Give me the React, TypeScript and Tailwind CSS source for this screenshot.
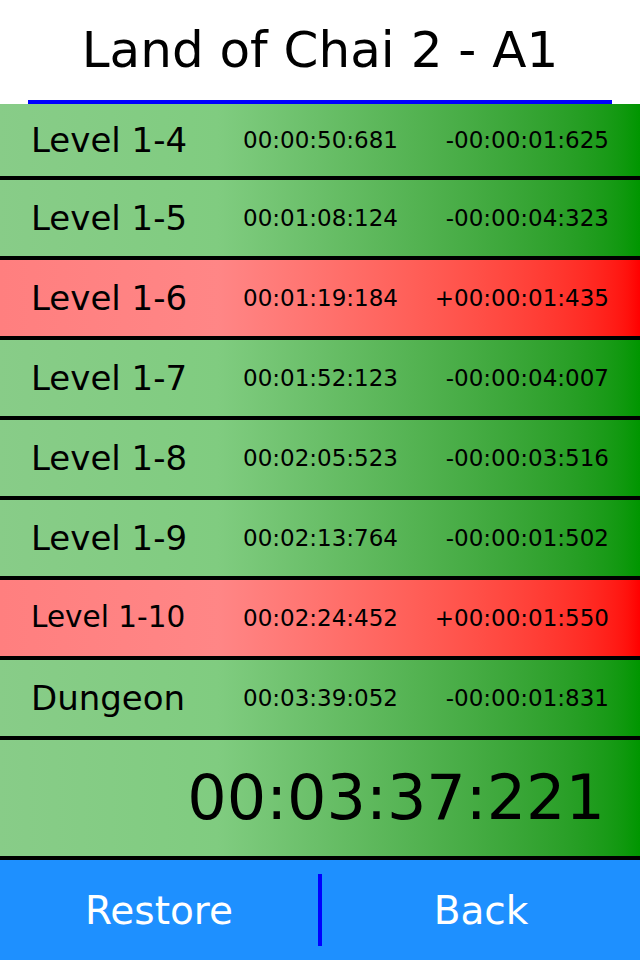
import React from "react";

type Row = { name: string; time: string; delta: string; bad: boolean; small?: boolean };

const rows: Row[] = [
  { name: "Level 1-4", time: "00:00:50:681", delta: "-00:00:01:625", bad: false },
  { name: "Level 1-5", time: "00:01:08:124", delta: "-00:00:04:323", bad: false },
  { name: "Level 1-6", time: "00:01:19:184", delta: "+00:00:01:435", bad: true },
  { name: "Level 1-7", time: "00:01:52:123", delta: "-00:00:04:007", bad: false },
  { name: "Level 1-8", time: "00:02:05:523", delta: "-00:00:03:516", bad: false },
  { name: "Level 1-9", time: "00:02:13:764", delta: "-00:00:01:502", bad: false },
  { name: "Level 1-10", time: "00:02:24:452", delta: "+00:00:01:550", bad: true, small: true },
  { name: "Dungeon", time: "00:03:39:052", delta: "-00:00:01:831", bad: false },
];

const green =
  "bg-gradient-to-r from-[#88cc88] via-[#80cc80] via-34% to-[#009600]";
const red =
  "bg-gradient-to-r from-[#ff7f7f] via-[#ff8686] via-34% to-[#ff0000]";

export default function App() {
  return (
    <div
      className="w-[640px] h-[960px] flex flex-col bg-white text-black overflow-hidden"
      style={{ fontFamily: '"DejaVu Sans", Verdana, sans-serif' }}
    >
      <div className="h-[100px] flex items-center justify-center text-[50px] leading-none">
        Land of Chai 2 - A1
      </div>
      <div className="h-[4px] mx-[28px] bg-[#0000ff]" />
      {rows.map((r, i) => (
        <div
          key={r.name}
          className={`flex items-center border-b-[4px] border-black ${
            i === 0 ? "h-[76px]" : "h-[80px]"
          } ${r.bad ? red : green}`}
        >
          <div
            className={`w-[243px] pl-[31px] leading-none ${
              r.small ? "text-[29.5px]" : "text-[34px]"
            }`}
          >
            {r.name}
          </div>
          <div className="text-[23px] leading-none">{r.time}</div>
          <div className="flex-1 text-right pr-[31px] text-[23px] leading-none">
            {r.delta}
          </div>
        </div>
      ))}
      <div
        className={`h-[120px] flex items-center justify-end pr-[35px] border-b-[4px] border-black ${green}`}
      >
        <span className="text-[62px] leading-none">00:03:37:221</span>
      </div>
      <div className="flex-1 flex items-center bg-[#1e90ff] text-white">
        <div className="flex-1 flex items-center justify-center text-[39px] leading-none">
          Restore
        </div>
        <div className="w-[4px] h-[72px] bg-[#0000ff]" />
        <div className="flex-1 flex items-center justify-center text-[39px] leading-none">
          Back
        </div>
      </div>
    </div>
  );
}
